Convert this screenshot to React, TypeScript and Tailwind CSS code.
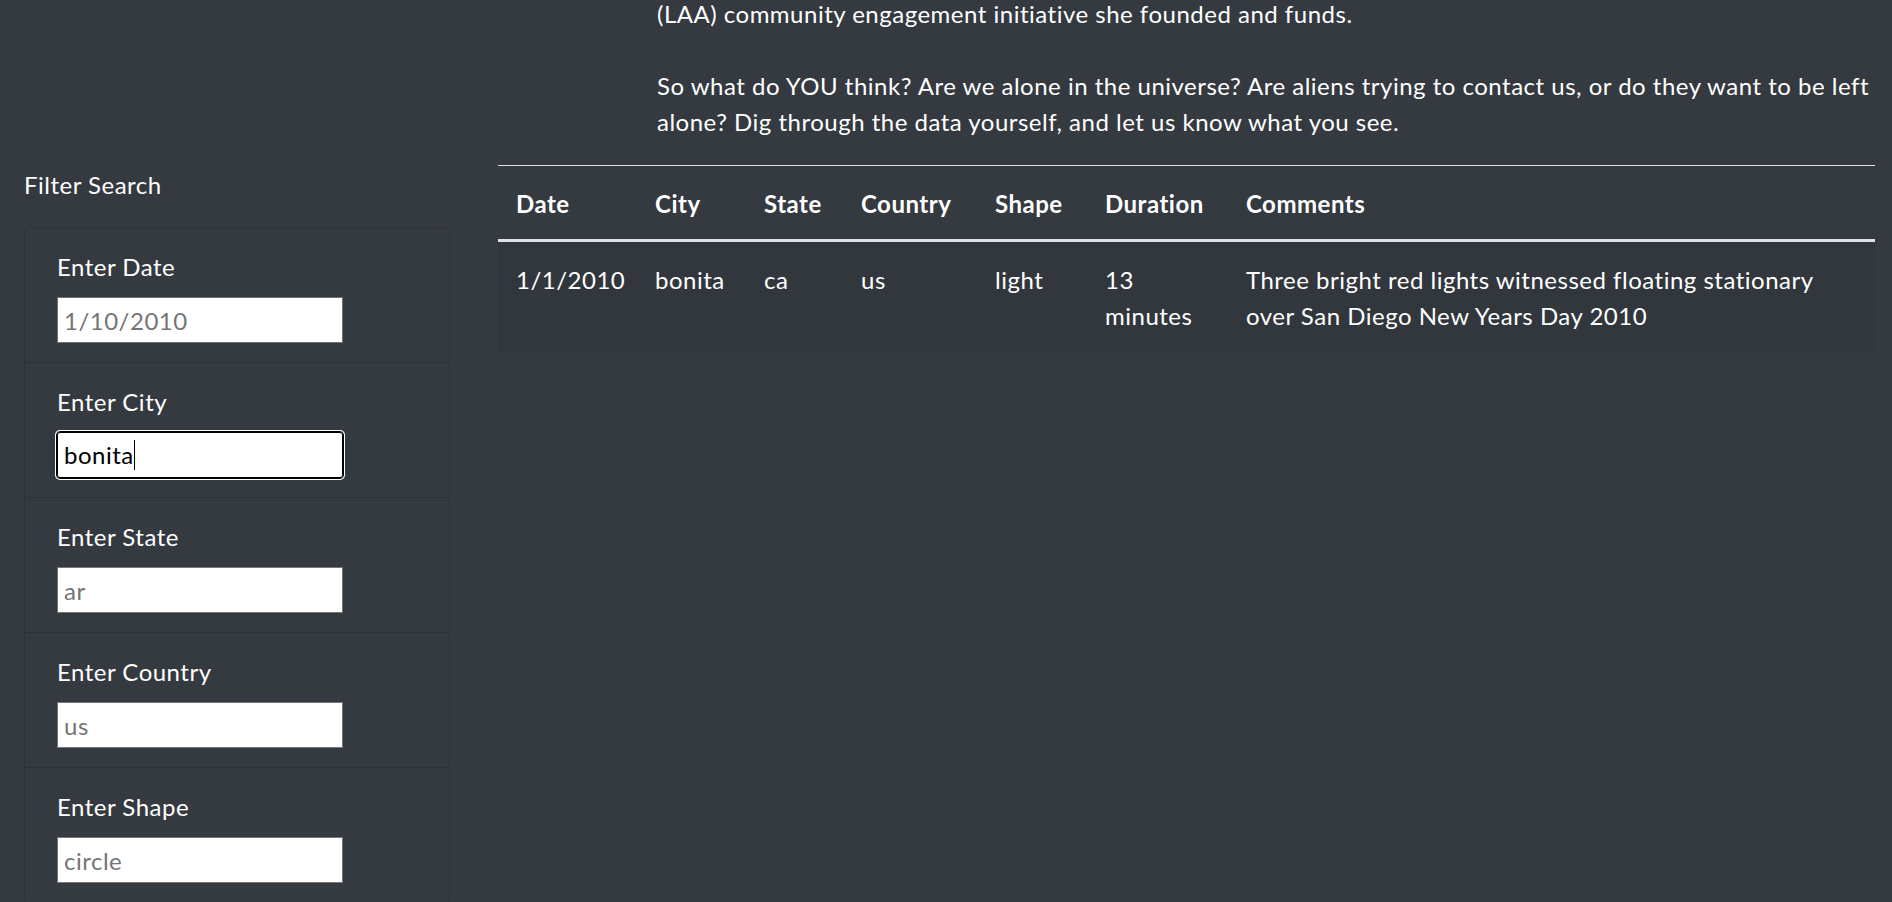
import React from 'react';

const filters = [
  { label: 'Enter Date', placeholder: '1/10/2010' },
  { label: 'Enter City', value: 'bonita', focused: true },
  { label: 'Enter State', placeholder: 'ar' },
  { label: 'Enter Country', placeholder: 'us' },
  { label: 'Enter Shape', placeholder: 'circle' },
];

const sightings = [
  {
    date: '1/1/2010',
    city: 'bonita',
    state: 'ca',
    country: 'us',
    shape: 'light',
    duration: '13 minutes',
    comments: 'Three bright red lights witnessed floating stationary over San Diego New Years Day 2010',
  },
];

export default function App() {
  return (
    <div className="h-[902px] overflow-hidden bg-[#343a40] text-white font-['Lato','Liberation_Sans',sans-serif] text-[24px] leading-[36px] tracking-[0.5px]">
      {/* Intro text (page is scrolled a little) */}
      <p className="ml-[657px] mr-[18px] -mt-[4px] mb-[25px]">
        (LAA) community engagement initiative she founded and funds.
        <br />
        <br />
        So what do YOU think? Are we alone in the universe? Are aliens trying to contact us, or do they want to be left
        <br />
        alone? Dig through the data yourself, and let us know what you see.
      </p>

      <div className="flex">
        {/* Sidebar filters */}
        <aside className="w-[498px] shrink-0 pl-[24px]">
          <div className="pt-[2px] mb-[24px]">Filter Search</div>
          <ul className="w-[426px] border border-black/[.125] rounded-[6px]">
            {filters.map((f) => (
              <li key={f.label} className="px-[32px] pt-[21px] pb-[19px] border-b border-black/[.125]">
                <label className="block mb-[12px]">{f.label}</label>
                {f.focused ? (
                  <div className="w-[286px] h-[46px] bg-white text-black pl-[6px] border border-black rounded-[3px] outline-1 outline-black shadow-[0_0_0_2px_#fff] flex items-center">
                    <span>{f.value}</span>
                    <span className="inline-block w-px h-[30px] bg-black"></span>
                  </div>
                ) : (
                  <input
                    type="text"
                    placeholder={f.placeholder}
                    className="w-[286px] h-[46px] bg-white text-black px-[6px] border border-[#767676] outline-none placeholder:text-[#757575]"
                  />
                )}
              </li>
            ))}
          </ul>
        </aside>

        {/* Results table */}
        <main className="w-[1377px] shrink-0">
          <table className="w-full table-fixed border-collapse text-left">
            <thead>
              <tr className="border-t border-[#dee2e6] border-b-[3px] border-b-[#dee2e6]">
                <th className="w-[139px] px-[18px] pt-[20px] pb-[17px] font-bold">Date</th>
                <th className="w-[109px] px-[18px] pt-[20px] pb-[17px] font-bold">City</th>
                <th className="w-[97px] px-[18px] pt-[20px] pb-[17px] font-bold">State</th>
                <th className="w-[134px] px-[18px] pt-[20px] pb-[17px] font-bold">Country</th>
                <th className="w-[110px] px-[18px] pt-[20px] pb-[17px] font-bold">Shape</th>
                <th className="w-[141px] px-[18px] pt-[20px] pb-[17px] font-bold">Duration</th>
                <th className="px-[18px] pt-[20px] pb-[17px] font-bold">Comments</th>
              </tr>
            </thead>
            <tbody>
              {sightings.map((s, i) => (
                <tr key={i} className="bg-[#31373d] align-top">
                  <td className="px-[18px] pt-[20px] pb-[18px]">{s.date}</td>
                  <td className="px-[18px] pt-[20px] pb-[18px]">{s.city}</td>
                  <td className="px-[18px] pt-[20px] pb-[18px]">{s.state}</td>
                  <td className="px-[18px] pt-[20px] pb-[18px]">{s.country}</td>
                  <td className="px-[18px] pt-[20px] pb-[18px]">{s.shape}</td>
                  <td className="px-[18px] pt-[20px] pb-[18px]">{s.duration}</td>
                  <td className="px-[18px] pt-[20px] pb-[18px]">{s.comments}</td>
                </tr>
              ))}
            </tbody>
          </table>
        </main>
      </div>
    </div>
  );
}
